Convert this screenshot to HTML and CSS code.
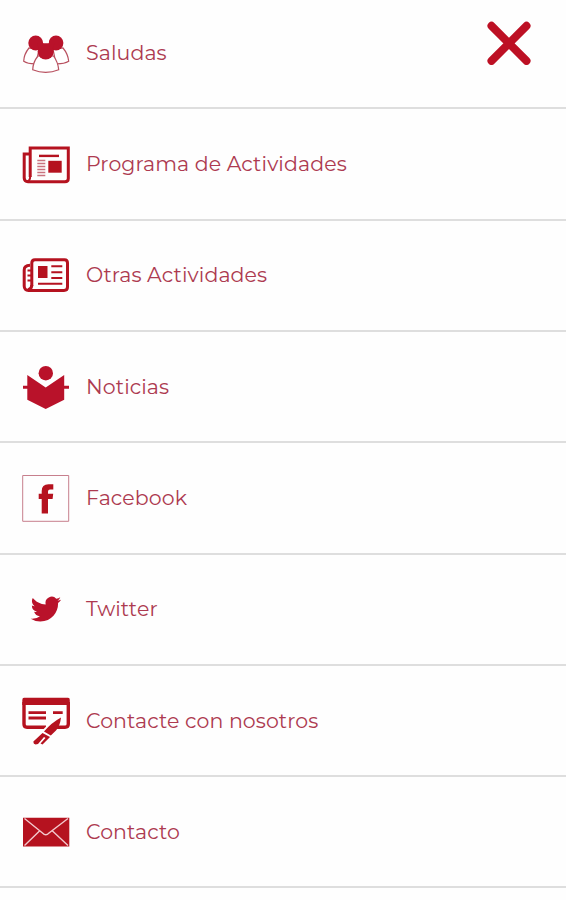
FILE: index.html
```html
<!DOCTYPE html>
<html lang="es">
<head>
<meta charset="utf-8">
<title>Menú</title>
<link rel="stylesheet" href="styles.css">
</head>
<body>
<nav class="menu">
  <a class="item saludas">
    <svg class="icon" viewBox="0 0 48 48"><g fill="#fff" stroke="#b8505f" stroke-width="1.2"><path d="M7 19Q2 25 1.700 32.200Q6 35 14 34.800L17 20ZM41 19Q46 25 46.700 32.200Q42 35 34 34.800L31 20Z"/><path d="M16 27Q11 33 10.700 40.800Q23.700 46 36.700 40.800Q36 33 31.500 27Z"/></g><g fill="#b9122a"><circle cx="13.700" cy="14" r="7.400"/><circle cx="34" cy="14" r="7.400"/><circle cx="23.700" cy="22.500" r="8"/><path d="M15 14L32.500 14L29 24H18Z"/></g><path fill="#fff" d="M20.600 9.500H27.400L26.600 14.300H21.400Z"/></svg>
    <span class="label">Saludas</span>
  </a>
  <a class="item programa">
    <svg class="icon" viewBox="0 0 48 48"><g fill="none" stroke="#b5121f" stroke-width="3"><path d="M8.200 37V8H46.300V38.500Q46.300 41.700 43 41.700H6Q2.200 41.700 2.200 38V14H8"/><path d="M8.200 36Q8.200 41 5 41.500" stroke-width="2"/><path d="M17 15.900H37" stroke-width="2.400"/><path d="M15.300 20.500H23.300M15.300 23.500H23.300M15.300 26.500H23.300M15.300 29.500H23.300M15.300 32.500H23.300M15.300 35.500H23.300" stroke="#c9737f" stroke-width="1.300"/></g><path fill="#b5121f" d="M26.300 20.800H39.700V32.700H26.300Z"/></svg>
    <span class="label">Programa de Actividades</span>
  </a>
  <a class="item otras">
    <svg class="icon" viewBox="0 0 48 48"><g fill="none" stroke="#b5121f" stroke-width="3"><path d="M9.800 35V12Q9.800 8.700 13 8.700H42.500Q45.500 8.700 45.500 12V36Q45.500 39.400 42 39.400H6.500Q2.200 39.400 2.200 35V19Q2.200 14.500 8 14.300"/><path d="M9.800 34Q9.800 38 6 39"/><path d="M5.500 19.500H9M5.500 24.500H9M5.500 29.500H9" stroke-width="2"/><path d="M29.300 15.200H40.300M29.300 21.200H40.300M29.300 26.900H40.300M16 32.700H40.300" stroke-width="2"/></g><path fill="#b5121f" d="M16 15H25.500V27H16Z"/></svg>
    <span class="label">Otras Actividades</span>
  </a>
  <a class="item noticias">
    <svg class="icon" viewBox="0 0 48 48"><g fill="#b9122a"><circle cx="23.800" cy="10.200" r="7.200"/><path d="M5.300 12L23.700 24.600L42.200 12V36.700L23.700 46L5.300 36.700ZM1 22.800H8V25.800H1ZM40 22.800H47V25.800H40Z"/></g></svg>
    <span class="label">Noticias</span>
  </a>
  <a class="item facebook">
    <svg class="icon" viewBox="0 0 48 48"><path fill="none" stroke="#c77f8d" d="M.7 1.500H46.700V47.300H.7Z"/><path fill="#b5121f" d="M19.700 39.600V25H16.700V19.700H19.700V17Q19.700 10.200 26.500 10.200H31.300V15.400H28Q26 15.400 26 17.500V19.700H31.200L30.600 25H26V39.600Z"/></svg>
    <span class="label">Facebook</span>
  </a>
  <a class="item twitter">
    <svg class="icon" viewBox="0 0 48 48"><path fill="#b9122a" transform="translate(8.700 8.900) scale(1.270 1.270)" d="M23.950 4.570a10 10 0 0 1-2.820.770 4.960 4.960 0 0 0 2.160-2.720c-.95.550-2 .960-3.130 1.190a4.920 4.920 0 0 0-8.380 4.480C7.690 8.100 4.070 6.130 1.640 3.160a4.800 4.800 0 0 0-.670 2.480c0 1.710.870 3.210 2.190 4.100a4.900 4.900 0 0 1-2.230-.620v.060a4.920 4.920 0 0 0 3.950 4.830 5 5 0 0 1-2.210.080 4.940 4.940 0 0 0 4.600 3.420A9.870 9.870 0 0 1 0 19.540a13.990 13.990 0 0 0 7.560 2.210c9.050 0 14-7.500 14-13.980 0-.210 0-.420-.020-.630a9.940 9.940 0 0 0 2.410-2.570Z"/></svg>
    <span class="label">Twitter</span>
  </a>
  <a class="item contacte">
    <svg class="icon" viewBox="0 0 48 48"><g fill="none" stroke="#b5121f"><path d="M2 5V27Q2 30.200 5 30.200H24M34 30.200H43Q46.300 30.200 46.300 27V5" stroke-width="3.400"/><path d="M6.500 15.600H24M6.500 21H24M31 15.600H40.700" stroke-width="2.800"/></g><path fill="#b5121f" d="M2 .7H46Q47.800 .7 47.800 3V8H.3V3Q.3 .7 2 .7Z"/><path d="M39.300 20L35 31.500L19.500 47H11V43L26.500 27Z" fill="#fff"/><path fill="#b5121f" d="M39 20.500Q38 29 34 33.500L28.800 38.500L22 34.500Q29 26 39 20.500ZM20.500 36L28 40L20.500 47.400L18.500 46.500L23.500 41L22 40L16 47Q11 48.500 11.400 44.500Z"/></svg>
    <span class="label">Contacte con nosotros</span>
  </a>
  <a class="item contacto">
    <svg class="icon" viewBox="0 0 48 48"><path fill="#b5121f" d="M1 9.700H47.300V38.400H1Z"/><path fill="none" stroke="#f3c9cd" stroke-width="1.400" d="M2.500 10.500L20.500 25Q23.800 28.500 27 25L46 10.500M2.500 37.500L17.500 23M46 37.500L30.500 23"/></svg>
    <span class="label">Contacto</span>
  </a>
</nav>
<svg class="close" viewBox="0 0 44 44"><path d="M4.500 4.800L39.500 39.800M39.500 4.800L4.500 39.800"/></svg>
</body>
</html>
```
FILE: styles.css
```css
body {
  margin: 0;
  height: 900px;
  overflow: hidden;
  background: #fefefe;
  font-family: Montserrat, Inter, "Liberation Sans", sans-serif;
}

.menu {
  margin-top: -1.9px;
}

.item {
  box-sizing: border-box;
  display: flex;
  align-items: center;
  gap: 16px;
  height: 111.3px;
  padding-left: 22px;
  border-bottom: 2px solid #dedede;
}

.icon {
  flex: none;
  width: 48px;
  height: 48px;
}

.label {
  color: #ad3a50;
  font-size: 20.5px;
  font-weight: 400;
  line-height: 28px;
  letter-spacing: 0.1px;
  white-space: nowrap;
}

.close {
  position: absolute;
  top: 21px;
  right: 35px;
  width: 44px;
  height: 44px;
  fill: none;
  stroke: #bd1024;
  stroke-width: 8;
  stroke-linecap: round;
}
```
